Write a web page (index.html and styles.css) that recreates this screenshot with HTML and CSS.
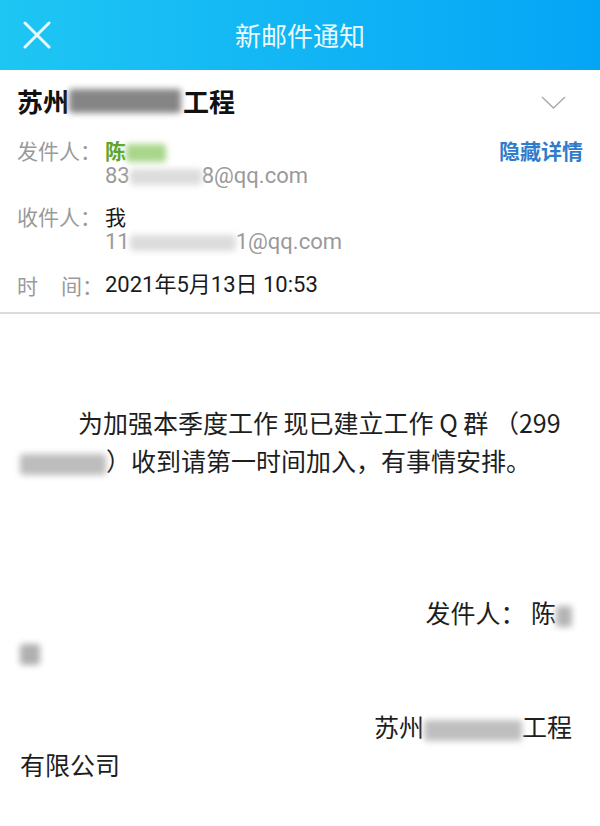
FILE: index.html
```html
<!DOCTYPE html>
<html lang="zh-CN">
<head>
  <meta charset="UTF-8" />
  <title>新邮件通知</title>
  <meta name="viewport" content="width=device-width, initial-scale=1.0"/>
  <link rel="stylesheet" href="styles.css">
</head>
<body>

  <header class="topbar">
    <a class="topbar-close" href="#">
      <svg width="28" height="28" viewBox="0 0 28 28">
        <path d="M2 2 L26 26 M26 2 L2 26" stroke="#e6f9ff" stroke-width="3" stroke-linecap="round" fill="none"/>
      </svg>
    </a>
    <h1 class="topbar-title">新邮件通知</h1>
    <span></span>
  </header>

  <main>
    <section class="mail-head">
      <div class="subject">
        <h2>苏州<span class="blur blur-subject"></span>工程</h2>
        <svg class="chevron" width="25" height="13" viewBox="0 0 25 13">
          <path d="M1 1 L12.5 12 L24 1" stroke="#a9a9a9" stroke-width="1.4" fill="none"/>
        </svg>
      </div>

      <div class="meta">
        <div class="meta-row">
          <span class="meta-label">发件人：</span>
          <div class="meta-value">
            <div class="sender-name">陈<span class="blur blur-name"></span></div>
            <div class="meta-mail">83<span class="blur blur-mail1"></span>8@qq.com</div>
          </div>
          <a class="meta-action" href="#">隐藏详情</a>
        </div>

        <div class="meta-row">
          <span class="meta-label">收件人：</span>
          <div class="meta-value">
            <div>我</div>
            <div class="meta-mail">11<span class="blur blur-mail2"></span>1@qq.com</div>
          </div>
        </div>

        <div class="meta-row meta-row-time">
          <span class="meta-label"><span class="time-gap">时</span>间：</span>
          <div class="meta-value meta-date">2021年5月13日 10:53</div>
        </div>
      </div>
    </section>

    <section class="mail-body">
      <p class="body-para">为加强本季度工作 现已建立工作 Q 群 （299<br><span class="blur blur-qq"></span>）收到请第一时间加入，有事情安排。</p>

      <p class="sign-right">发件人： 陈<span class="blur blur-sign"></span></p>
      <p class="sign-left"><span class="blur blur-sign2"></span></p>

      <p class="sign-right sign-company">苏州<span class="blur blur-company"></span>工程</p>
      <p class="sign-left">有限公司</p>
    </section>
  </main>

</body>
</html>
```

FILE: styles.css
```css
/* RESET BÁSICO */
* {
  margin: 0;
  padding: 0;
  box-sizing: border-box;
}

body {
  font-family: "Noto Sans CJK SC", "Noto Sans", sans-serif;
  background-color: #fff;
  color: #1a1a1a;
  width: 600px;
  min-height: 826px;
}

/* barra do topo */
.topbar {
  height: 70px;
  background: linear-gradient(to right, #1ec6f3, #05a5f6);
  display: grid;
  grid-template-columns: 1fr auto 1fr;
  align-items: center;
  padding: 0 23px;
}

.topbar-close {
  display: flex;
  align-items: center;
  width: 28px;
  height: 28px;
}

.topbar-title {
  color: #eafaff;
  font-size: 26px;
  font-weight: normal;
  line-height: 36px;
}

/* cabeçalho do email */
.mail-head {
  padding: 13px 17px 14px 17px;
  border-bottom: 2px solid #dcdcdc;
}

.subject {
  display: flex;
  align-items: center;
  justify-content: space-between;
  height: 36px;
}

.subject h2 {
  font-size: 26px;
  font-weight: bold;
  line-height: 36px;
  color: #111;
  display: flex;
  align-items: center;
}

.chevron {
  margin-right: 17px;
  margin-top: 2px;
}

.meta {
  margin-top: 18px;
  font-size: 21px;
  line-height: 26px;
}

.meta-row {
  display: grid;
  grid-template-columns: 88px 1fr auto;
  margin-bottom: 14px;
}

.meta-row-time {
  padding-top: 3px;
  margin-bottom: 0;
}

.meta-label {
  color: #9a9a9a;
  white-space: nowrap;
}

.time-gap {
  margin-right: 23px;
}

.meta-value {
  color: #1a1a1a;
}

.meta-date {
  font-size: 22px;
  font-family: Roboto, "Noto Sans CJK SC", sans-serif;
}

.sender-name {
  color: #5fa52a;
  font-weight: bold;
}

.meta-mail {
  color: #9a9a9a;
  font-size: 22px;
  font-family: Roboto, "Noto Sans CJK SC", sans-serif;
}

.meta-action {
  color: #2f7ccc;
  font-weight: bold;
  font-size: 21px;
  text-decoration: none;
}

/* manchas desfocadas */
.blur {
  display: inline-block;
  vertical-align: middle;
  height: 0.85em;
  background-color: #c8c8c8;
  filter: blur(3px);
  border-radius: 3px;
}

.blur-subject {
  width: 112px;
  height: 24px;
  background-color: #858585;
  margin: 0 2px 0 0;
}

.blur-name {
  width: 40px;
  background-color: #a8d68a;
}

.blur-mail1 {
  width: 72px;
  height: 0.7em;
  background-color: #dcdcdc;
}

.blur-mail2 {
  width: 106px;
  height: 0.7em;
  background-color: #dcdcdc;
}

.blur-qq {
  width: 86px;
  background-color: #bdbdbd;
}

.blur-sign {
  width: 16px;
  background-color: #b5b5b5;
}

.blur-sign2 {
  width: 20px;
  background-color: #b0b0b0;
}

.blur-company {
  width: 98px;
  background-color: #bfbfbf;
}

/* corpo do email */
.mail-body {
  padding: 89px 28px 0 20px;
  font-size: 25px;
  line-height: 38px;
  color: #1e1e1e;
}

.body-para {
  text-indent: 58px;
  margin-bottom: 114px;
}

.sign-right {
  text-align: right;
}

.sign-left {
  text-align: left;
}

.sign-company {
  margin-top: 38px;
}
```
